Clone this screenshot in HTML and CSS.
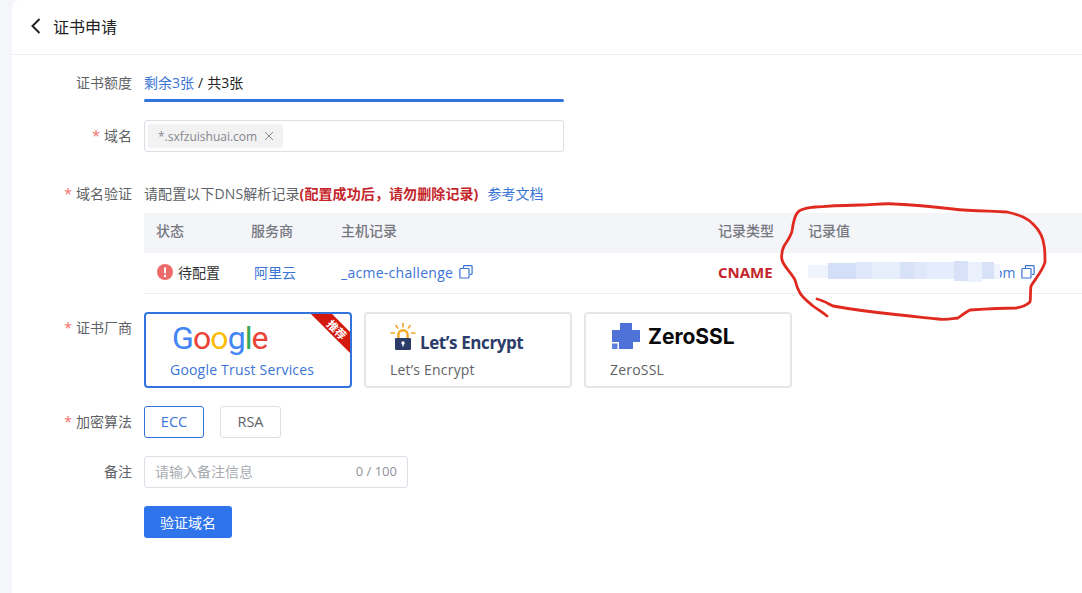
FILE: index.html
```html
<!DOCTYPE html>
<html lang="zh-CN">
<head>
<meta charset="utf-8">
<title>证书申请</title>
<link rel="stylesheet" href="styles.css">
</head>
<body>
<main class="page">
  <header class="head">
    <svg class="back" width="12" height="16" viewBox="0 0 12 16"><path d="M9.5 1 L2.5 8 L9.5 15" fill="none" stroke="#222" stroke-width="2"/></svg>
    <h1 class="title">证书申请</h1>
  </header>
  <form class="form">
    <div class="row row-quota">
      <div class="label">证书额度</div>
      <div class="content">
        <div class="quota"><span class="link">剩余3张</span><span class="slash">/</span>共3张</div>
        <div class="bar"></div>
      </div>
    </div>
    <div class="row row-domain">
      <div class="label"><i>*</i>域名</div>
      <div class="content">
        <div class="tagbox"><span class="tag">*.sxfzuishuai.com<svg class="tag-x" width="10" height="10" viewBox="0 0 10 10"><path d="M1 1 L9 9 M9 1 L1 9" stroke="#888" stroke-width="1"/></svg></span></div>
      </div>
    </div>
    <div class="row row-verify">
      <div class="label label-verify"><i>*</i>域名验证</div>
      <div class="content wide">
        <div class="hint">请配置以下DNS解析记录<b class="warn">(配置成功后，请勿删除记录)</b><span class="link doc">参考文档</span></div>
        <div class="table">
          <div class="tr th">
            <div>状态</div><div>服务商</div><div>主机记录</div><div>记录类型</div><div>记录值</div>
          </div>
          <div class="tr td">
            <div class="status"><svg width="16" height="16" viewBox="0 0 16 16"><circle cx="8" cy="8" r="8" fill="#ee6b6b"/><rect x="7" y="3.2" width="2" height="6.4" rx="1" fill="#fff"/><circle cx="8" cy="12" r="1.2" fill="#fff"/></svg>待配置</div>
            <div class="link vendor">阿里云</div>
            <div class="link host">_acme-challenge<svg class="copy" width="14" height="14" viewBox="0 0 14 14"><path d="M4.5 3V1.5A.8.8 0 0 1 5.3.7h7a.8.8 0 0 1 .8.8v7a.8.8 0 0 1-.8.8H11M1.7 3.5h7.5a.8.8 0 0 1 .8.8v7.9a.8.8 0 0 1-.8.8H1.7a.8.8 0 0 1-.8-.8V4.3a.8.8 0 0 1 .8-.8Z" fill="none" stroke="#3a74d6" stroke-width="1.2"/></svg></div>
            <div class="cname">CNAME</div>
            <div class="link value">
              <svg class="mask" width="192" height="24" viewBox="0 0 192 24"><rect x="0" y="5" width="20" height="13" fill="#eef3fc"/><rect x="20" y="3" width="28" height="16" fill="#d3dff7"/><rect x="48" y="2" width="16" height="17" fill="#dfe8fa"/><rect x="64" y="2" width="28" height="17" fill="#e6edfb"/><rect x="92" y="2" width="14" height="17" fill="#d7e2f8"/><rect x="106" y="2" width="12" height="17" fill="#dfe8fa"/><rect x="118" y="2" width="28" height="17" fill="#e5ecfb"/><rect x="146" y="1" width="14" height="20" fill="#d7e2f8"/><rect x="160" y="2" width="14" height="20" fill="#eaf0fc"/><rect x="174" y="2" width="12" height="17" fill="#d7e2f8"/><rect x="186" y="4" width="8" height="15" fill="#f0f4fd"/></svg><span class="om">om</span><svg class="copy" width="14" height="14" viewBox="0 0 14 14"><path d="M4.5 3V1.5A.8.8 0 0 1 5.3.7h7a.8.8 0 0 1 .8.8v7a.8.8 0 0 1-.8.8H11M1.7 3.5h7.5a.8.8 0 0 1 .8.8v7.9a.8.8 0 0 1-.8.8H1.7a.8.8 0 0 1-.8-.8V4.3a.8.8 0 0 1 .8-.8Z" fill="none" stroke="#3a74d6" stroke-width="1.2"/></svg>
            </div>
          </div>
        </div>
      </div>
    </div>
    <div class="row row-vendor">
      <div class="label"><i>*</i>证书厂商</div>
      <div class="cards">
        <div class="card active">
          <div class="logo logo-google"><span class="g-b">G</span><span class="g-r">o</span><span class="g-y">o</span><span class="g-b">g</span><span class="g-g">l</span><span class="g-r">e</span></div>
          <div class="card-name">Google Trust Services</div>
          <div class="ribbon"><span>推荐</span></div>
        </div>
        <div class="card">
          <div class="logo logo-le">
            <svg width="26" height="27" viewBox="0 0 26 27"><g stroke="#f5a623" stroke-width="1.6" fill="none"><path d="M13 0v4.5M5.5 2l2.6 3.6M20.5 2l-2.6 3.6M0.5 10h4.5M21 10h4.5"/></g><path d="M8.4 15v-3.2a4.6 4.6 0 0 1 9.2 0v3.2" fill="none" stroke="#f5a623" stroke-width="2.4"/><rect x="5" y="15" width="16" height="12" rx="1.2" fill="#2c3c69"/><circle cx="13" cy="20" r="1.7" fill="#fff"/><rect x="12.4" y="20" width="1.2" height="3.6" fill="#fff"/></svg>
            <span>Let’s Encrypt</span>
          </div>
          <div class="card-name">Let’s Encrypt</div>
        </div>
        <div class="card">
          <div class="logo logo-zero">
            <svg width="28" height="26" viewBox="0 0 28 26"><path d="M8 0h12v7h8v12h-7v7H7v-7H0V7h8Z" fill="#4f72d9"/><rect x="0" y="20.5" width="5.5" height="5.5" fill="#5f80e0"/></svg>
            <span>ZeroSSL</span>
          </div>
          <div class="card-name">ZeroSSL</div>
        </div>
      </div>
    </div>
    <div class="row row-algo">
      <div class="label"><i>*</i>加密算法</div>
      <div class="algos"><div class="algo on">ECC</div><div class="algo">RSA</div></div>
    </div>
    <div class="row row-note">
      <div class="label">备注</div>
      <div class="note"><span class="ph">请输入备注信息</span><span class="count">0 / 100</span></div>
    </div>
    <div class="row row-submit">
      <div class="label"></div>
      <button type="button" class="submit">验证域名</button>
    </div>
  </form>
</main>
<svg class="scribble" width="1082" height="593" viewBox="0 0 1082 593"><path d="M827 316 C822 312 817 309 813 306 C807 301 803 298 800 293 C797 288 796 284 795 280 C791 272 784 267 782 260 C781 254 782 250 784 246 C788 240 791 236 792 231 C793 224 794 216 798 212 C802 208 808 208 815 207 C832 206 846 205 860 205 C872 205 882 203 895 204 C915 205 935 207 953 209 C970 211 990 211 1007 212 C1020 215 1028 218 1034 225 C1040 231 1043 238 1044 245 C1045 250 1045 256 1045 262 C1043 270 1036 278 1031 286 C1030 292 1031 298 1030 302 C1026 306 1022 307 1016 308 C1000 308 985 309 970 310 C966 312 962 315 958 318 C950 319 945 320 938 319 C925 318 912 316 900 315 C880 313 855 310 833 306 C827 303 822 300 817 299" fill="none" stroke="#e02a20" stroke-width="2.8" stroke-linecap="round" stroke-linejoin="round"/></svg>
</body>
</html>
```
FILE: styles.css
```css
* { box-sizing: border-box; }
html, body { margin: 0; height: 100%; }
body {
  background: #f5f6fa;
  padding-left: 12px;
  overflow: hidden;
  font-family: "Open Sans", "Noto Sans CJK SC", sans-serif;
  font-size: 14px;
  color: #606266;
  position: relative;
}
.page { background: #fff; height: 593px; border-top-left-radius: 8px; }
.head {
  height: 55px;
  display: flex;
  align-items: center;
  padding-left: 18px;
  padding-bottom: 2px;
  border-bottom: 1px solid #f0f0f2;
}
.back { margin-right: 11px; }
.title { margin: 0; font-size: 16px; font-weight: 400; color: #222; }
.form { display: flex; flex-direction: column; }
.row { display: flex; align-items: flex-start; }
.label {
  width: 120px;
  flex: none;
  text-align: right;
  line-height: 20px;
  color: #606266;
}
.label i { color: #f56c6c; font-style: normal; margin-right: 4px; }
.content { margin-left: 12px; width: 420px; }
.content.wide { width: auto; flex: 1; }
.link { color: #3a74d6; }
.row-quota { padding-top: 18px; height: 65px; }
.quota { line-height: 20px; color: #222; }
.slash { margin: 0 4px; }
.bar { height: 3px; background: #3273dc; border-radius: 2px; margin-top: 6px; }
.row-domain { height: 65px; }
.row-domain .label { line-height: 32px; }
.tagbox {
  height: 32px;
  border: 1px solid #dcdfe6;
  border-radius: 3px;
  display: flex;
  align-items: center;
  padding-left: 3px;
}
.tag {
  display: flex;
  align-items: center;
  height: 24px;
  background: #f2f2f3;
  border-radius: 3px;
  padding: 0 9px 0 10px;
  font-size: 12px;
  color: #85888e;
}
.tag-x { margin-left: 7px; }
.row-verify { height: 127px; }
.label-verify { line-height: 18px; }
.hint { line-height: 18px; height: 28px; letter-spacing: 0.1px; }
.warn { color: #c4242a; font-weight: 700; }
.doc { margin-left: 9px; letter-spacing: 0; }
.table { width: 100%; }
.tr { display: grid; grid-template-columns: 95px 90px 377px 90px 1fr; padding-left: 12px; }
.th { height: 40px; line-height: 36px; background: #f4f5f9; font-weight: 500; color: #75787e; }
.td { height: 41px; align-items: center; padding-bottom: 2px; border-bottom: 1px solid #eceef2; }
.status { display: flex; align-items: center; gap: 5px; color: #333; padding-left: 1px; }
.vendor { padding-left: 3px; }
.host { display: flex; align-items: center; letter-spacing: 0.28px; }
.copy { margin-left: 6px; flex: none; }
.cname { color: #c4242a; font-weight: 700; font-size: 15px; }
.value { display: flex; align-items: center; }
.mask { flex: none; filter: blur(0.6px); position: relative; }
.om { margin-left: -6px; }
.row-vendor { height: 94px; }
.row-vendor .label { line-height: 32px; }
.cards { margin-left: 12px; display: flex; gap: 12px; }
.card {
  position: relative;
  width: 208px;
  height: 76px;
  border: 2px solid #e6e6e6;
  border-radius: 4px;
  padding-left: 24px;
  overflow: hidden;
  color: #606266;
}
.card.active { border-color: #3273dc; }
.card.active .card-name { color: #3a74d6; }
.logo { height: 38px; display: flex; white-space: nowrap; }
.card-name { line-height: 20px; margin-top: 8px; letter-spacing: 0.2px; }
.logo-google {
  font-family: "Roboto", sans-serif;
  font-weight: 400;
  font-size: 32px;
  letter-spacing: -0.9px;
  align-items: center;
  padding-left: 2px;
  padding-top: 9px;
}
.g-b { color: #4285f4; }
.g-r { color: #ea4335; }
.g-y { color: #fbbc05; }
.g-g { color: #34a853; }
.logo-le { align-items: flex-end; gap: 4px; }
.logo-le svg { flex: none; margin-bottom: 2px; }
.logo-le span {
  font-size: 17px;
  line-height: 20px;
  font-weight: 700;
  color: #2c3c69;
  letter-spacing: -0.4px;
  margin-bottom: -1px;
}
.logo-zero { align-items: flex-start; padding-left: 2px; padding-top: 9px; }
.logo-zero span {
  font-family: "Inter", sans-serif;
  font-size: 21px;
  line-height: 28px;
  font-weight: 700;
  color: #0a0a0a;
  margin-left: 8px;
}
.ribbon {
  position: absolute;
  top: 8px;
  right: -22px;
  width: 70px;
  height: 15px;
  background: #d3190f;
  transform: rotate(45deg);
  color: #fff;
  font-size: 11px;
  font-weight: 700;
  line-height: 15px;
  text-align: center;
}
.row-algo { height: 50px; }
.row-algo .label { line-height: 32px; }
.algos { margin-left: 12px; display: flex; gap: 16px; }
.algo {
  height: 32px;
  width: 61px;
  border: 1px solid #dcdfe6;
  border-radius: 3px;
  text-align: center;
  line-height: 29px;
  font-size: 14.5px;
  color: #606266;
}
.algo.on { width: 60px; border-color: #3273dc; color: #3a74d6; }
.row-note { height: 50px; }
.row-note .label { line-height: 32px; }
.note {
  margin-left: 12px;
  width: 264px;
  height: 32px;
  border: 1px solid #dcdfe6;
  border-radius: 3px;
  display: flex;
  align-items: center;
  justify-content: space-between;
  padding: 0 10px 2px;
  color: #a8abb2;
}
.count { font-size: 13px; color: #909399; }
.submit {
  margin-left: 12px;
  width: 88px;
  height: 32px;
  border: 0;
  border-radius: 3px;
  background: #2f74eb;
  color: #fff;
  font: inherit;
  font-size: 14px;
}
.scribble { position: absolute; left: 0; top: 0; pointer-events: none; }
```
